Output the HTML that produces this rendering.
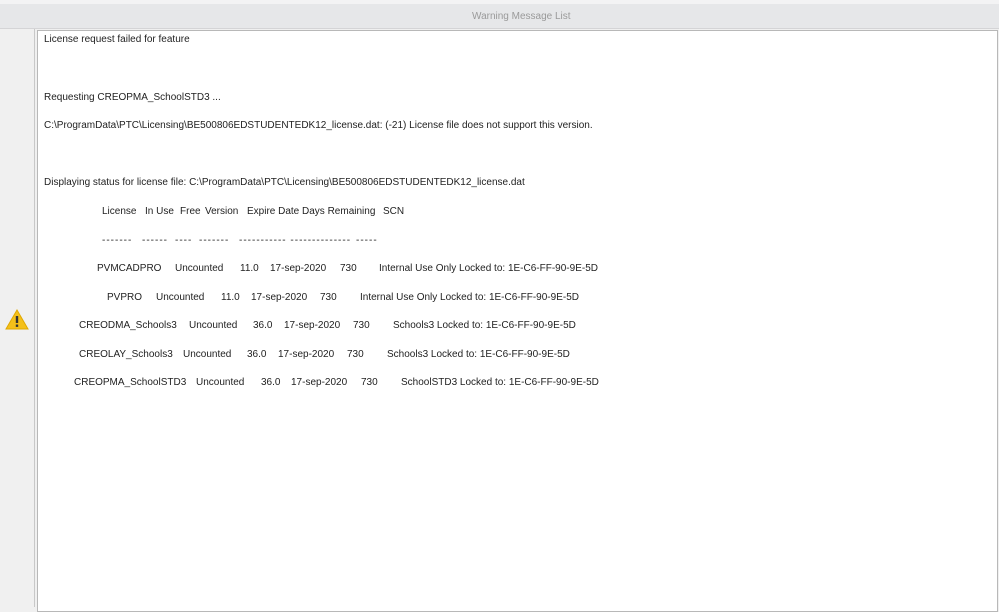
<!DOCTYPE html>
<html><head><style>
html,body{margin:0;padding:0;width:999px;height:607px;overflow:hidden;background:#f0f0f0;font-family:"Liberation Sans",sans-serif;}
.top{position:absolute;left:0;top:0;width:999px;height:4px;background:#f3f3f4;}
.title{position:absolute;left:0;top:4px;width:999px;height:24px;background:#e6e7e9;border-bottom:1px solid #d4d4d6;}
.title span{position:absolute;left:472px;top:7px;font-size:10px;color:#9a9a9a;}
.left{position:absolute;left:0;top:29px;width:34px;height:578px;background:#f0f0f0;border-right:1px solid #c8c8c8;}
.box{position:absolute;left:37px;top:30px;width:959px;height:580px;background:#fff;border:1px solid #b8b8b8;}
.t{position:absolute;font-size:10px;color:#222;white-space:pre;line-height:12px;}
.d{letter-spacing:1px;}
</style></head><body>
<div class="top"></div>
<div class="title"><span>Warning Message List</span></div>
<div class="left"></div>
<svg style="position:absolute;left:5px;top:309px" width="24" height="21" viewBox="0 0 24 21"><path d="M12 1 L23 20 L1 20 Z" fill="#f4c01a" stroke="#e0a800" stroke-width="1"/><rect x="10.8" y="7" width="2.4" height="7" fill="#333"/><rect x="10.8" y="15.5" width="2.4" height="2.4" fill="#333"/></svg>
<div class="box"></div>
<div class="t" style="left:44px;top:34px">License request failed for feature</div>
<div class="t" style="left:44px;top:92px">Requesting CREOPMA_SchoolSTD3 ...</div>
<div class="t" style="left:44px;top:120px">C:\ProgramData\PTC\Licensing\BE500806EDSTUDENTEDK12_license.dat: (-21) License file does not support this version.</div>
<div class="t" style="left:44px;top:177px">Displaying status for license file: C:\ProgramData\PTC\Licensing\BE500806EDSTUDENTEDK12_license.dat</div>

<div class="t" style="left:102px;top:206px">License</div>
<div class="t" style="left:145px;top:206px">In Use</div>
<div class="t" style="left:180px;top:206px">Free</div>
<div class="t" style="left:205px;top:206px">Version</div>
<div class="t" style="left:247px;top:206px">Expire Date Days Remaining</div>
<div class="t" style="left:383px;top:206px">SCN</div>

<div class="t d" style="left:102px;top:235px">-------</div>
<div class="t d" style="left:142px;top:235px">------</div>
<div class="t d" style="left:175px;top:235px">----</div>
<div class="t d" style="left:199px;top:235px">-------</div>
<div class="t d" style="left:239px;top:235px">----------- --------------</div>
<div class="t d" style="left:356px;top:235px">-----</div>

<div class="t" style="left:97px;top:263px">PVMCADPRO</div>
<div class="t" style="left:175px;top:263px">Uncounted</div>
<div class="t" style="left:240px;top:263px">11.0</div>
<div class="t" style="left:270px;top:263px">17-sep-2020</div>
<div class="t" style="left:340px;top:263px">730</div>
<div class="t" style="left:379px;top:263px">Internal Use Only Locked to: 1E-C6-FF-90-9E-5D</div>

<div class="t" style="left:107px;top:292px">PVPRO</div>
<div class="t" style="left:156px;top:292px">Uncounted</div>
<div class="t" style="left:221px;top:292px">11.0</div>
<div class="t" style="left:251px;top:292px">17-sep-2020</div>
<div class="t" style="left:320px;top:292px">730</div>
<div class="t" style="left:360px;top:292px">Internal Use Only Locked to: 1E-C6-FF-90-9E-5D</div>

<div class="t" style="left:79px;top:320px">CREODMA_Schools3</div>
<div class="t" style="left:189px;top:320px">Uncounted</div>
<div class="t" style="left:253px;top:320px">36.0</div>
<div class="t" style="left:284px;top:320px">17-sep-2020</div>
<div class="t" style="left:353px;top:320px">730</div>
<div class="t" style="left:393px;top:320px">Schools3 Locked to: 1E-C6-FF-90-9E-5D</div>

<div class="t" style="left:79px;top:349px">CREOLAY_Schools3</div>
<div class="t" style="left:183px;top:349px">Uncounted</div>
<div class="t" style="left:247px;top:349px">36.0</div>
<div class="t" style="left:278px;top:349px">17-sep-2020</div>
<div class="t" style="left:347px;top:349px">730</div>
<div class="t" style="left:387px;top:349px">Schools3 Locked to: 1E-C6-FF-90-9E-5D</div>

<div class="t" style="left:74px;top:377px">CREOPMA_SchoolSTD3</div>
<div class="t" style="left:196px;top:377px">Uncounted</div>
<div class="t" style="left:261px;top:377px">36.0</div>
<div class="t" style="left:291px;top:377px">17-sep-2020</div>
<div class="t" style="left:361px;top:377px">730</div>
<div class="t" style="left:401px;top:377px">SchoolSTD3 Locked to: 1E-C6-FF-90-9E-5D</div>
</body></html>
